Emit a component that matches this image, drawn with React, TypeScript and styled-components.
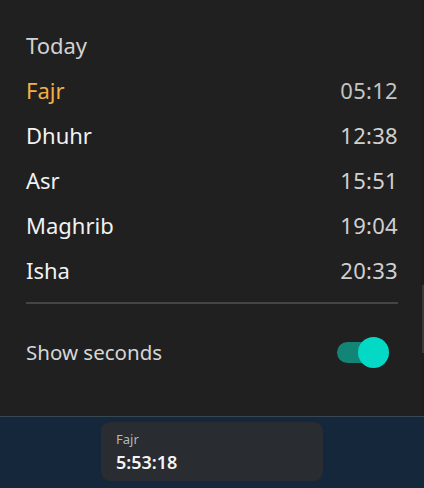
import React, { useState } from "react";
import styled, { createGlobalStyle } from "styled-components";

const GlobalStyle = createGlobalStyle`
  html, body {
    margin: 0;
    padding: 0;
    background: #1f1f1f;
  }
  body {
    font-family: "Noto Sans", "Open Sans", sans-serif;
  }
`;

const prayers = [
  { name: "Fajr", time: "05:12", next: true },
  { name: "Dhuhr", time: "12:38" },
  { name: "Asr", time: "15:51" },
  { name: "Maghrib", time: "19:04" },
  { name: "Isha", time: "20:33" },
];

const Screen = styled.div`
  width: 424px;
  height: 488px;
  display: flex;
  flex-direction: column;
  overflow: hidden;
`;

const Top = styled.div`
  display: flex;
  height: 416px;
`;

const Panel = styled.div`
  width: 421px;
  box-sizing: border-box;
  padding: 22px 23px 0 26px;
  background: #202020;
  display: flex;
  flex-direction: column;
`;

const Edge = styled.div`
  flex: 1;
  background: #1e1e1e;
  display: flex;
  flex-direction: column;
  align-items: flex-end;
`;

const EdgeThumb = styled.div`
  width: 2px;
  height: 68px;
  margin-top: 285px;
  background: #3a3a3a;
`;

const Heading = styled.div`
  height: 45px;
  display: flex;
  align-items: center;
  font-size: 22px;
  color: #d2d2d2;
`;

const Row = styled.div<{ $next?: boolean }>`
  height: 45px;
  display: flex;
  align-items: center;
  justify-content: space-between;
  font-size: 22px;
  color: ${(p) => (p.$next ? "#f4b045" : "#f2f2f2")};
`;

const Time = styled.span<{ $next?: boolean }>`
  color: ${(p) => (p.$next ? "#c4c4c4" : "#d0d0d0")};
  letter-spacing: 0.3px;
`;

const Divider = styled.div`
  height: 2px;
  margin-top: 10px;
  background: #454545;
`;

const SettingRow = styled.div`
  margin-top: 30px;
  height: 36px;
  display: flex;
  align-items: center;
  justify-content: space-between;
  font-size: 20.5px;
  color: #d6d6d6;
  padding-right: 21px;
`;

const Switch = styled.button<{ $on: boolean }>`
  position: relative;
  width: 40px;
  height: 21px;
  border: none;
  padding: 0;
  border-radius: 11px;
  background: ${(p) => (p.$on ? "#138577" : "#555")};
  cursor: pointer;
`;

const Knob = styled.span<{ $on: boolean }>`
  position: absolute;
  top: -5px;
  left: ${(p) => (p.$on ? "21px" : "-6px")};
  width: 31px;
  height: 31px;
  border-radius: 50%;
  background: ${(p) => (p.$on ? "#04d9c5" : "#aaa")};
`;

const Taskbar = styled.div`
  flex: 1;
  border-top: 1px solid #394753;
  background: #15273a;
  padding: 5px 0 0 101px;
`;

const Widget = styled.div`
  width: 222px;
  height: 59px;
  box-sizing: border-box;
  border-radius: 9px;
  background: #292c30;
  padding: 8px 0 0 15px;
  display: flex;
  flex-direction: column;
`;

const WidgetLabel = styled.div`
  font-size: 13px;
  color: #b4b6b8;
  line-height: 19px;
`;

const WidgetTime = styled.div`
  font-size: 18px;
  font-weight: 600;
  color: #f4f4f4;
  line-height: 26px;
`;

const App = () => {
  const [seconds, setSeconds] = useState(true);

  return (
    <Screen>
      <GlobalStyle />
      <Top>
        <Panel>
          <Heading>Today</Heading>
          {prayers.map((p) => (
            <Row key={p.name} $next={p.next}>
              <span>{p.name}</span>
              <Time $next={p.next}>{p.time}</Time>
            </Row>
          ))}
          <Divider />
          <SettingRow>
            <span>Show seconds</span>
            <Switch $on={seconds} onClick={() => setSeconds(!seconds)} aria-label="Show seconds">
              <Knob $on={seconds} />
            </Switch>
          </SettingRow>
        </Panel>
        <Edge>
          <EdgeThumb />
        </Edge>
      </Top>
      <Taskbar>
        <Widget>
          <WidgetLabel>Fajr</WidgetLabel>
          <WidgetTime>{seconds ? "5:53:18" : "5:53"}</WidgetTime>
        </Widget>
      </Taskbar>
    </Screen>
  );
};

export default App;
